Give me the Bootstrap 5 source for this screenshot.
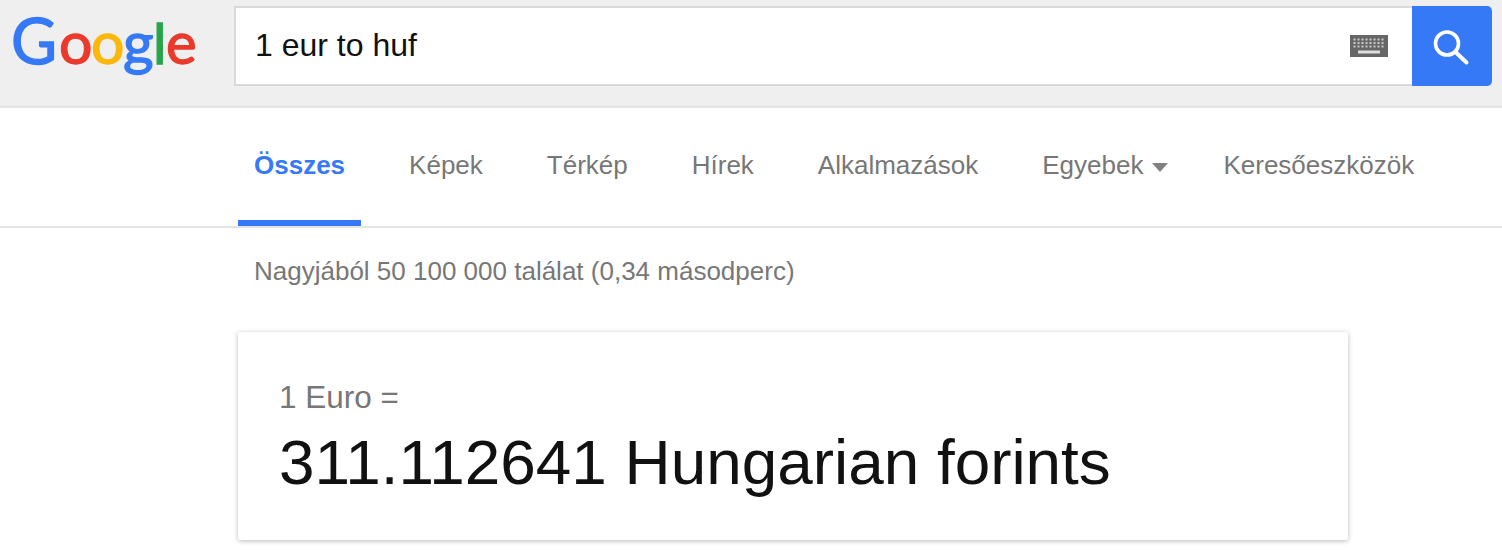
<!DOCTYPE html>
<html lang="hu"><head><meta charset="utf-8"><title>1 eur to huf</title>
<link href="https://cdn.jsdelivr.net/npm/bootstrap@5.3.0/dist/css/bootstrap.min.css" rel="stylesheet">
<style>
html,body{height:550px;overflow:hidden;background:#fff}
body{font-family:"Liberation Sans",Arial,sans-serif}
.topbar{height:108px;background:#efefef;border-bottom:2px solid #e4e4e4}
.logo-wrap{width:234px;padding:0}
.logo-svg{display:block;overflow:visible;font-family:Lato,"Liberation Sans",sans-serif;font-weight:400;stroke-width:1.3px}
.search-shell{width:1258px;height:80px;margin-top:6px;background:#fff;border:2px solid #d9d9d9;border-right:0;border-radius:0 4px 4px 0}
.search-input{font-size:32px;color:#111;padding:0 0 2px 19px;border:0;background:transparent;outline:0;flex:1;height:100%}
.search-btn{width:80px;height:80px;margin:-2px 0;background:#3579f6;border:0;border-radius:0 5px 5px 0}
.search-btn:hover{background:#3579f6}
.tabs-row{height:120px;border-bottom:2px solid #e4e4e4;padding-left:238px}
.tab-item{font-size:26px;color:#777;padding:0 16px 4px;margin-right:32px;height:118px;line-height:1;text-decoration:none}
.tab-on{color:#3579f6;font-weight:700;border-bottom:6px solid #3579f6;padding-top:2px;padding-bottom:0}
.tab-on:hover{color:#3579f6}
.caret-down{width:0;height:0;border-left:8px solid transparent;border-right:8px solid transparent;border-top:9px solid #808080;margin:4px -9px 0 9px}
.stats-line{font-size:26px;color:#777;padding:27px 0 0 254px;line-height:32px}
.result-box{width:1110px;height:208px;margin:45px 0 0 238px;padding:43px 41px 0;box-shadow:0 1px 5px rgba(0,0,0,.28);border-radius:2px}
.result-from{font-size:31.5px;line-height:44px;color:#777}
.result-to{font-size:63.85px;line-height:76px;color:#111;margin-top:5px}
</style></head><body>
<header class="topbar d-flex">
<div class="logo-wrap"><svg class="logo-svg" width="234" height="106" viewBox="0 0 234 106" role="img" aria-label="Google"><text y="64" font-size="63"><tspan x="11" fill="#3579f6" stroke="#3579f6">G</tspan><tspan x="59" fill="#ea3a2c" stroke="#ea3a2c" font-size="59">o</tspan><tspan x="91" fill="#fbb70a" stroke="#fbb70a" font-size="59">o</tspan><tspan x="123" fill="#3579f6" stroke="#3579f6" font-size="59">g</tspan><tspan x="153" fill="#27a44a" stroke="#27a44a" font-size="57">l</tspan><tspan x="166" fill="#ea3a2c" stroke="#ea3a2c" font-size="58">e</tspan></text></svg></div>
<form class="search-shell d-flex align-items-center">
<input class="search-input" value="1 eur to huf" aria-label="Keresés">
<svg class="kbd-icon me-4" width="38" height="22" viewBox="0 0 38 22"><rect width="38" height="22" fill="#666"/><g fill="#c9c9c9"><rect x="3.5" y="3.5" width="2" height="2"/><rect x="7.5" y="3.5" width="2" height="2"/><rect x="11.5" y="3.5" width="2" height="2"/><rect x="15.5" y="3.5" width="2" height="2"/><rect x="19.5" y="3.5" width="2" height="2"/><rect x="23.5" y="3.5" width="2" height="2"/><rect x="27.5" y="3.5" width="2" height="2"/><rect x="31.5" y="3.5" width="2" height="2"/><rect x="3.5" y="7" width="2" height="2"/><rect x="7.5" y="7" width="2" height="2"/><rect x="11.5" y="7" width="2" height="2"/><rect x="15.5" y="7" width="2" height="2"/><rect x="19.5" y="7" width="2" height="2"/><rect x="23.5" y="7" width="2" height="2"/><rect x="27.5" y="7" width="2" height="2"/><rect x="31.5" y="7" width="2" height="2"/><rect x="3.5" y="10.5" width="2" height="2"/><rect x="7.5" y="10.5" width="2" height="2"/><rect x="11.5" y="10.5" width="2" height="2"/><rect x="15.5" y="10.5" width="2" height="2"/><rect x="19.5" y="10.5" width="2" height="2"/><rect x="23.5" y="10.5" width="2" height="2"/><rect x="27.5" y="10.5" width="2" height="2"/><rect x="31.5" y="10.5" width="2" height="2"/><rect x="8" y="15.5" width="22" height="3" fill="#ddd"/></g></svg>
<button type="button" class="search-btn btn d-flex align-items-center justify-content-center p-0" aria-label="Keresés"><svg width="80" height="80" viewBox="0 0 80 80" fill="none" stroke="#fff" stroke-linecap="round"><circle cx="35" cy="37.5" r="11.5" stroke-width="3.6"/><path d="M44 46.5 54.5 56.5" stroke-width="4"/></svg></button>
</form>
</header>
<nav class="tabs-row d-flex align-items-center">
<a class="tab-item tab-on d-flex align-items-center" href="#">Összes</a>
<a class="tab-item d-flex align-items-center" href="#">Képek</a>
<a class="tab-item d-flex align-items-center" href="#">Térkép</a>
<a class="tab-item d-flex align-items-center" href="#">Hírek</a>
<a class="tab-item d-flex align-items-center" href="#">Alkalmazások</a>
<a class="tab-item d-flex align-items-center" href="#">Egyebek<span class="caret-down"></span></a>
<a class="tab-item d-flex align-items-center" href="#">Keresőeszközök</a>
</nav>
<div class="stats-line">Nagyjából 50 100 000 találat (0,34 másodperc)</div>
<section class="result-box bg-white">
<div class="result-from">1 Euro =</div>
<div class="result-to">311.112641 Hungarian forints</div>
</section>
</body></html>
